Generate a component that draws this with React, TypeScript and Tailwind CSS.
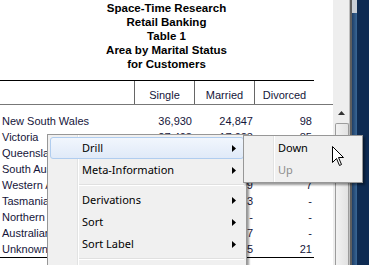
import React from "react";

const ROWS: [string, string, string, string][] = [
  ["New South Wales", "36,930", "24,847", "98"],
  ["Victoria", "27,408", "17,023", "85"],
  ["Queensland", "21,512", "13,914", "63"],
  ["South Australia", "9,842", "6,311", "24"],
  ["Western Australia", "12,306", "8,119", "7"],
  ["Tasmania", "3,115", "2,093", "-"],
  ["Northern Territory", "1,204", "-", "-"],
  ["Australian Capital Territory", "2,460", "1,637", "-"],
  ["Unknown", "4,118", "2,915", "21"],
];

const TITLE = ["Space-Time Research", "Retail Banking", "Table 1", "Area by Marital Status", "for Customers"];

const Arrow = () => (
  <svg width="4" height="7" viewBox="0 0 4 7" className="shrink-0">
    <path d="M0 0 L4 3.5 L0 7 Z" fill="#000" />
  </svg>
);

function MenuItem({ label, sub, hot, disabled }: { label: string; sub?: boolean; hot?: boolean; disabled?: boolean }) {
  return (
    <div
      className={`h-[22px] flex items-center rounded-[3px] border ${
        hot ? "border-[#b0cdef] bg-gradient-to-b from-[#f1f6fd] to-[#e0eaf8]" : "border-transparent"
      }`}
    >
      <span className={`pl-[31px] flex-1 leading-[22px] ${disabled ? "text-[#8d8d8d]" : "text-black"}`}>{label}</span>
      {sub && (
        <span className="pr-[7px] flex items-center">
          <Arrow />
        </span>
      )}
    </div>
  );
}

const Sep = () => (
  <div className="h-[8px] pl-[29px] flex flex-col justify-center">
    <div className="h-px bg-[#e0e0e0]" />
    <div className="h-px bg-white" />
  </div>
);

export default function App() {
  return (
    <div className="relative w-[369px] h-[265px] overflow-hidden bg-white flex" style={{ fontFamily: '"Liberation Sans", Arial, sans-serif' }}>
      {/* report pane */}
      <div className="w-[333px] shrink-0 flex flex-col text-[11px]">
        <div className="pt-[1px] mb-[9px] text-center font-bold text-black text-[11.5px] leading-[14px]">
          {TITLE.map((t) => (
            <div key={t}>{t}</div>
          ))}
        </div>
        <div className="w-[314px] border-t border-black grid grid-cols-[134px_60px_60px_60px] h-[24px] text-[#15153a]">
          <div />
          {["Single", "Married", "Divorced"].map((h) => (
            <div key={h} className="border-l border-[#666] text-center pt-[6px] leading-[16px]">
              {h}
            </div>
          ))}
        </div>
        <div className="w-[333px] h-px bg-[#777]" />
        <div className="pt-[8px] w-[314px] text-[#15153a]">
          {ROWS.map((r) => (
            <div key={r[0]} className="grid grid-cols-[134px_60px_60px_60px] h-[16px] leading-[16px] whitespace-nowrap">
              <div className="pl-[2px] overflow-hidden">{r[0]}</div>
              <div className="text-right pr-[2px]">{r[1]}</div>
              <div className="text-right pr-[1px]">{r[2]}</div>
              <div className="text-right pr-[2px]">{r[3]}</div>
            </div>
          ))}
          <div className="border-t border-black" />
        </div>
      </div>

      {/* scrollbar */}
      <div className="w-[17px] shrink-0 bg-[#eeeeee] border-r border-[#bdbdbd] flex flex-col">
        <div className="h-[104px]" />
        <div className="h-[18px] flex items-center justify-center">
          <svg width="7" height="4" viewBox="0 0 7 4">
            <path d="M0 4 L3.5 0 L7 4 Z" fill="#333" />
          </svg>
        </div>
        <div className="ml-[2px] mt-[1px] flex-1 rounded-t-[2px] border border-b-0 border-[#9c9c9c] bg-gradient-to-r from-[#f2f2f2] to-[#e2e2e2]" />
      </div>

      {/* window frame */}
      <div className="w-[2px] shrink-0 bg-[#5e5e5e]" />
      <div className="w-[5px] shrink-0 flex flex-col">
        <div className="h-[13px] bg-[#c9cfd6]" />
        <div className="flex-1 bg-gradient-to-r from-[#1e3f68] to-[#3b6896]" />
      </div>
      <div className="flex-1 bg-[#0e2b52]" />

      {/* context menu */}
      <div
        className="absolute left-[47px] top-[134px] w-[200px] h-[150px] border border-[#979797] bg-[#f0f0f0] shadow-[2px_2px_2px_rgba(0,0,0,0.4)] px-[2px] pt-[2px] text-[11px]"
        style={{ fontFamily: '"Noto Sans", sans-serif' }}
      >
        <div className="absolute left-[29px] top-0 bottom-0 w-px bg-[#e2e3e3]" />
        <div className="absolute left-[30px] top-0 bottom-0 w-px bg-white" />
        <div className="relative">
          <MenuItem label="Drill" sub hot />
          <MenuItem label="Meta-Information" sub />
          <Sep />
          <MenuItem label="Derivations" sub />
          <MenuItem label="Sort" sub />
          <MenuItem label="Sort Label" sub />
          <Sep />
          <div className="h-[22px]" />
        </div>
      </div>

      {/* submenu */}
      <div
        className="absolute left-[243px] top-[135px] w-[120px] h-[48px] border border-[#979797] bg-[#f0f0f0] shadow-[2px_2px_2px_rgba(0,0,0,0.4)] px-[2px] pt-[1px] text-[11px]"
        style={{ fontFamily: '"Noto Sans", sans-serif' }}
      >
        <div className="absolute left-[29px] top-0 bottom-0 w-px bg-[#e2e3e3]" />
        <div className="absolute left-[30px] top-0 bottom-0 w-px bg-white" />
        <div className="relative">
          <MenuItem label="Down" />
          <MenuItem label="Up" disabled />
        </div>
      </div>

      {/* mouse pointer */}
      <svg className="absolute left-[332px] top-[146px]" width="13" height="21" viewBox="0 0 13 21">
        <path d="M0.5 0.5 L0.5 16.5 L4.5 12.5 L7.5 19.5 L9.5 18.5 L6.5 11.5 L11.5 11.5 Z" fill="#fff" stroke="#000" strokeWidth="1" strokeLinejoin="miter" />
      </svg>
    </div>
  );
}
